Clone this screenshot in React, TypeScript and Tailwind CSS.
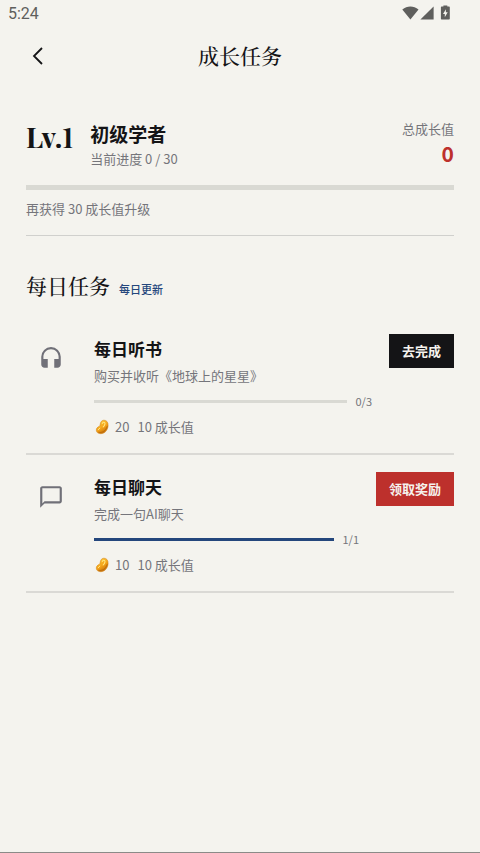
import type { ReactNode } from 'react';
import { MdChatBubbleOutline, MdHeadset } from 'react-icons/md';

interface Task {
  id: string;
  title: string;
  description: string;
  icon: ReactNode;
  current: number;
  target: number;
  coins: number;
  growth: number;
}

const tasks: Task[] = [
  {
    id: 'listen',
    title: '每日听书',
    description: '购买并收听《地球上的星星》',
    icon: <MdHeadset size={26} />,
    current: 0,
    target: 3,
    coins: 20,
    growth: 10,
  },
  {
    id: 'chat',
    title: '每日聊天',
    description: '完成一句AI聊天',
    icon: <MdChatBubbleOutline size={26} />,
    current: 1,
    target: 1,
    coins: 10,
    growth: 10,
  },
];

function StatusBar() {
  return (
    <div className="flex h-7 items-center justify-between pl-2 pr-7 font-['Roboto',sans-serif] text-base text-[#5f5f5d]">
      <span>5:24</span>
      <div className="flex items-center pb-[3px]">
        {/* wifi */}
        <svg width="17" height="14" viewBox="0 0 17 14" fill="currentColor" aria-hidden="true">
          <path d="M0.3 3.6C2.7 1.4 5.5 0.4 8.4 0.4s5.7 1 8.1 3.2L8.4 13.5z" />
        </svg>
        {/* signal */}
        <svg className="ml-px" width="14" height="14" viewBox="0 0 14 14" fill="currentColor" aria-hidden="true">
          <path d="M13.6 0.4v13.2H0.4z" />
        </svg>
        {/* battery */}
        <svg className="ml-1.5 mr-px" width="11" height="15" viewBox="0 0 11 15" fill="currentColor" aria-hidden="true">
          <path
            fillRule="evenodd"
            d="M3.4 0.4h3.9v1.2h1.5c.6 0 1 .4 1 1v10.9c0 .6-.4 1-1 1H1.9c-.6 0-1-.4-1-1V2.6c0-.6.4-1 1-1h1.5zM5.9 4.2L3 8.9h1.8v3.3l2.9-4.9H5.9z"
          />
        </svg>
      </div>
    </div>
  );
}

function CoinBean() {
  return (
    <svg width="15" height="16" viewBox="0 0 15 16" aria-hidden="true">
      <defs>
        <linearGradient id="bean" x1="0.2" y1="0" x2="0.8" y2="1">
          <stop offset="0" stopColor="#ffcf3c" />
          <stop offset="0.55" stopColor="#f3a017" />
          <stop offset="1" stopColor="#b8640a" />
        </linearGradient>
      </defs>
      <path
        d="M9.8 1.200c2.700-.2 4.400 2 4.300 5.100-.1 4.500-3.100 8.300-7.300 8.400-2.800.1-4.500-1.500-4.500-3.600 0-1.800 1.200-2.800 2.500-3.500 1-.5 1.300-1.100 1.400-2.300.2-2.300 1.500-4 3.600-4.100z"
        fill="url(#bean)"
        stroke="#cc7c0e"
        strokeWidth="0.500"
      />
      <path d="M8.300 4.500c.2-.9.8-1.400 1.600-1.300 1 .1 1.200 1 1 1.900-.3 1.200-.9 2.100-1.700 2.800" fill="none" stroke="#ffe680" strokeWidth="1.100" strokeLinecap="round" />
      <path d="M4.300 10.700c.2-.7.8-1.100 1.500-1.500" fill="none" stroke="#ffe680" strokeWidth="1" strokeLinecap="round" />
      <path d="M4.800 13.300c3.300.9 7-1.300 8.300-5.700" fill="none" stroke="#b8680b" strokeWidth="0.900" strokeLinecap="round" />
    </svg>
  );
}

function TaskRow({ task }: { task: Task }) {
  const done = task.current >= task.target;
  const percent = Math.min(100, (task.current / task.target) * 100);

  return (
    <li className="flex items-start border-b-2 border-[#dad9d5] py-[17px]">
      <div className="flex size-[50px] shrink-0 items-center justify-center text-[#707078]">{task.icon}</div>

      <div className="ml-[18px] min-w-0 flex-1">
        <h3 className="text-[17px] leading-[30px] font-bold text-[#141416]">{task.title}</h3>
        <p className="text-[13px] leading-6 text-[#75757b]">{task.description}</p>
        <div className="mt-1 flex items-center gap-2">
          <div className="h-[3px] flex-1 bg-[#d9d9d3]">
            <div className="h-full bg-[#24467c]" style={{ width: `${percent}%` }} />
          </div>
          <span className="text-[11px] leading-[18px] text-[#75757b]">
            {task.current}/{task.target}
          </span>
        </div>
        <div className="mt-2 flex items-center text-[13px] leading-[18px] text-[#75757b]">
          <CoinBean />
          <span className="ml-1.5">{task.coins}</span>
          <span className="ml-2">{task.growth} 成长值</span>
        </div>
      </div>

      {done ? (
        <button type="button" className="ml-[17px] h-[34px] shrink-0 bg-[#bd302c] px-[13px] text-[13px] font-bold text-[#f5f3ee]">
          领取奖励
        </button>
      ) : (
        <button type="button" className="ml-[17px] h-[34px] shrink-0 bg-[#141416] px-[13px] text-[13px] font-bold text-[#f5f3ee]">
          去完成
        </button>
      )}
    </li>
  );
}

export default function App() {
  return (
    <div className="min-h-screen border-b border-[#8b8b88] bg-[#f4f3ee] font-['Noto_Sans_CJK_SC',sans-serif] text-[#141416]">
      <StatusBar />

      <header className="grid h-14 grid-cols-[1fr_auto_1fr] items-center px-[26px]">
        <button type="button" aria-label="返回" className="flex size-6 items-center justify-center">
          <svg width="12" height="18" viewBox="0 0 12 18" fill="none" stroke="currentColor" strokeWidth="1.800" aria-hidden="true">
            <path d="M10 1L2 9l8 8" />
          </svg>
        </button>
        <h1 className="font-['Noto_Serif_CJK_SC','Noto_Serif_SC','Noto_Sans_CJK_SC',serif] text-[21px] font-medium">成长任务</h1>
      </header>

      <main className="px-[26px] pt-9">
        {/* Level summary */}
        <section className="border-b border-[#d0d0cd] pb-[15px]">
          <div className="flex items-start">
            <div className="font-['Playfair_Display','Liberation_Serif',serif] text-[28px] leading-[34px] font-bold lining-nums">Lv.1</div>
            <div className="ml-[17px] flex-1">
              <h2 className="text-[19px] leading-7 font-bold">初级学者</h2>
              <p className="text-[13px] leading-[22px] text-[#75757b]">当前进度 0 / 30</p>
            </div>
            <div className="text-right">
              <div className="text-[13px] leading-[18px] text-[#75757b]">总成长值</div>
              <div className="text-[21px] leading-[30px] font-bold text-[#bd302c]">0</div>
            </div>
          </div>
          <div className="mt-[15px] h-[5px] bg-[#d9d9d3]" />
          <p className="mt-2 text-[13px] leading-[22px] text-[#75757b]">再获得 30 成长值升级</p>
        </section>

        {/* Daily tasks */}
        <section className="pt-[34px]">
          <div className="flex items-baseline gap-[9px]">
            <h2 className="font-['Noto_Serif_CJK_SC','Noto_Serif_SC','Noto_Sans_CJK_SC',serif] text-[21px] leading-[30px] font-medium">每日任务</h2>
            <span className="text-[11px] font-medium text-[#24467c]">每日更新</span>
          </div>
          <ul className="mt-[17px]">
            {tasks.map((task) => (
              <TaskRow key={task.id} task={task} />
            ))}
          </ul>
        </section>
      </main>
    </div>
  );
}
